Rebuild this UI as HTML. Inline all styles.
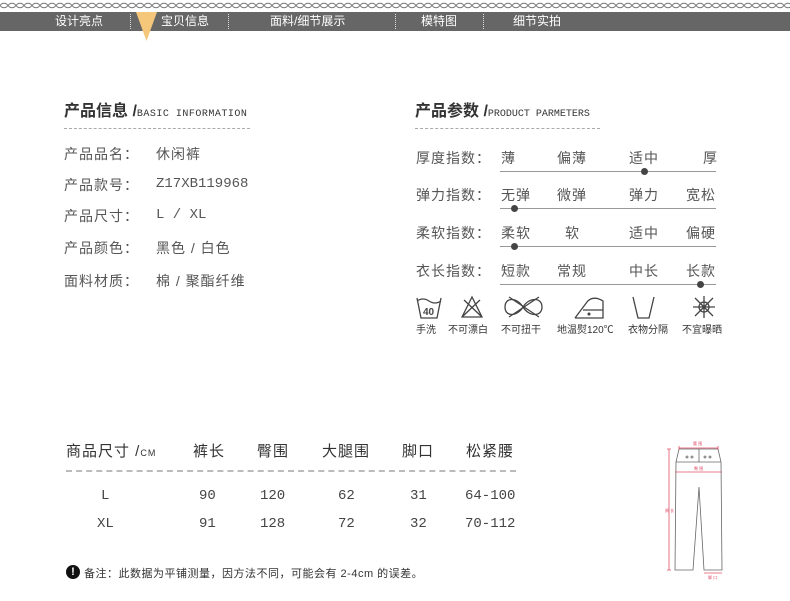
<!DOCTYPE html>
<html><head><meta charset="utf-8"><style>
*{margin:0;padding:0}
body{width:790px;height:601px;background:#fff;position:relative;overflow:hidden;font-family:"Liberation Sans","Noto Sans CJK SC",sans-serif;color:#555}
.a{position:absolute;white-space:nowrap}
.nav{position:absolute;left:0;top:12px;width:790px;height:19px;background:#666}
.nt{position:absolute;top:12px;color:#fff;font-size:12px;line-height:19px}
.sep{position:absolute;top:14px;height:15px;border-left:1px dotted #ddd}
.lbl{font-size:14px;color:#555;letter-spacing:1px}
.dash{position:absolute;height:0;border-top:1px dashed #aaa}
.ln{position:absolute;left:500px;width:216px;height:1px;background:#999}
.dot{position:absolute;width:7px;height:7px;border-radius:50%;background:#444}
.ic{font-size:10px;color:#333}
.th{font-size:15px;color:#333;top:440px;letter-spacing:1px}
.td{font-size:14px;color:#444;font-family:"Liberation Mono","Noto Sans CJK SC",monospace}
</style></head><body>
<svg class="a" style="left:0;top:0" width="790" height="11"><defs><pattern id="p" width="8" height="11" patternUnits="userSpaceOnUse"><ellipse cx="4" cy="5.5" rx="3.5" ry="2.2" fill="none" stroke="#777" stroke-width="1"/></pattern></defs><rect width="790" height="11" fill="url(#p)"/></svg>
<div class="nav"></div>
<div class="nt" style="left:55px">设计亮点</div>
<div class="sep" style="left:130px"></div>
<svg class="a" style="left:136px;top:12px" width="21" height="29"><polygon points="0,0 21,0 10.5,29" fill="#f5c77a"/></svg>
<div class="nt" style="left:161px">宝贝信息</div>
<div class="sep" style="left:228px"></div>
<div class="nt" style="left:270px">面料/细节展示</div>
<div class="sep" style="left:395px"></div>
<div class="nt" style="left:421px">模特图</div>
<div class="sep" style="left:483px"></div>
<div class="nt" style="left:513px">细节实拍</div>

<div class="a" style="left:64px;top:97px;font-size:16px;font-weight:bold;color:#333">产品信息 /<span style="font-size:10px;font-weight:normal;font-family:'Liberation Mono',monospace;letter-spacing:0.5px">BASIC INFORMATION</span></div>
<div class="dash" style="left:64px;top:128px;width:186px"></div>
<div class="a lbl" style="left:64px;top:144px">产品品名：</div><div class="a lbl" style="left:156px;top:144px">休闲裤</div>
<div class="a lbl" style="left:64px;top:175px">产品款号：</div><div class="a lbl" style="left:156px;top:176px;font-family:'Liberation Mono',monospace;letter-spacing:0">Z17XB119968</div>
<div class="a lbl" style="left:64px;top:206px">产品尺寸：</div><div class="a lbl" style="left:156px;top:207px;font-family:'Liberation Mono',monospace;letter-spacing:0">L / XL</div>
<div class="a lbl" style="left:64px;top:238px">产品颜色：</div><div class="a lbl" style="left:156px;top:238px">黑色 / 白色</div>
<div class="a lbl" style="left:64px;top:271px">面料材质：</div><div class="a lbl" style="left:156px;top:271px">棉 / 聚酯纤维</div>

<div class="a" style="left:415px;top:97px;font-size:16px;font-weight:bold;color:#333">产品参数 /<span style="font-size:10px;font-weight:normal;font-family:'Liberation Mono',monospace">PRODUCT PARMETERS</span></div>
<div class="dash" style="left:415px;top:128px;width:185px"></div>

<div class="a lbl" style="left:416px;top:148px">厚度指数：</div>
<div class="a lbl" style="left:501px;top:148px">薄</div><div class="a lbl" style="left:557px;top:148px">偏薄</div><div class="a lbl" style="left:629px;top:148px">适中</div><div class="a lbl" style="left:703px;top:148px">厚</div>
<div class="ln" style="top:171px"></div><div class="dot" style="left:641px;top:168px"></div>

<div class="a lbl" style="left:416px;top:185px">弹力指数：</div>
<div class="a lbl" style="left:501px;top:185px">无弹</div><div class="a lbl" style="left:557px;top:185px">微弹</div><div class="a lbl" style="left:629px;top:185px">弹力</div><div class="a lbl" style="left:686px;top:185px">宽松</div>
<div class="ln" style="top:208px"></div><div class="dot" style="left:511px;top:205px"></div>

<div class="a lbl" style="left:416px;top:223px">柔软指数：</div>
<div class="a lbl" style="left:501px;top:223px">柔软</div><div class="a lbl" style="left:565px;top:223px">软</div><div class="a lbl" style="left:629px;top:223px">适中</div><div class="a lbl" style="left:686px;top:223px">偏硬</div>
<div class="ln" style="top:246px"></div><div class="dot" style="left:511px;top:243px"></div>

<div class="a lbl" style="left:416px;top:261px">衣长指数：</div>
<div class="a lbl" style="left:501px;top:261px">短款</div><div class="a lbl" style="left:557px;top:261px">常规</div><div class="a lbl" style="left:629px;top:261px">中长</div><div class="a lbl" style="left:686px;top:261px">长款</div>
<div class="ln" style="top:284px"></div><div class="dot" style="left:697px;top:281px"></div>

<svg class="a" style="left:405px;top:292px" width="330" height="30" fill="none" stroke="#444" stroke-width="1.3">
<path d="M12 6 L16 26 H32 L36 6 M12 9 Q18 5 24 9 Q30 13 36 9"/><text x="18" y="23" font-size="10" fill="#444" stroke="none" font-weight="bold">40</text>
<path d="M57 25 L67 5 L77 25 Z M59 8 L77 25 M75 8 L57 25"/>
<path d="M118 15 C112 5 100 5 100 15 C100 25 112 25 118 15 C124 5 137 5 137 15 C137 25 124 25 118 15"/><path d="M104 5 L134 25 M104 25 L134 5"/>
<path d="M170 26 H198 V9 Q188 3 182 10 L170 26 M178 18 H198"/><circle cx="184" cy="22" r="0.9" fill="#444"/>
<path d="M228 5 L233 26 H244 L249 5"/>
<circle cx="299" cy="15" r="5"/><path d="M290 6 L308 24 M308 6 L290 24 M299 4 V26 M288 15 H310"/>
</svg>
<div class="a ic" style="left:416px;top:321px">手洗</div>
<div class="a ic" style="left:448px;top:321px">不可漂白</div>
<div class="a ic" style="left:501px;top:321px">不可扭干</div>
<div class="a ic" style="left:557px;top:321px">地温熨120℃</div>
<div class="a ic" style="left:628px;top:321px">衣物分隔</div>
<div class="a ic" style="left:682px;top:321px">不宜曝晒</div>

<div class="a th" style="left:66px">商品尺寸 /<span style="font-size:9px">CM</span></div>
<div class="a th" style="left:193px">裤长</div>
<div class="a th" style="left:257px">臀围</div>
<div class="a th" style="left:322px">大腿围</div>
<div class="a th" style="left:402px">脚口</div>
<div class="a th" style="left:466px">松紧腰</div>
<div class="dash" style="left:66px;top:470px;width:450px;border-top:2px dashed #bbb"></div>
<div class="a td" style="left:101px;top:488px">L</div><div class="a td" style="left:199px;top:488px">90</div><div class="a td" style="left:260px;top:488px">120</div><div class="a td" style="left:338px;top:488px">62</div><div class="a td" style="left:410px;top:488px">31</div><div class="a td" style="left:465px;top:488px">64-100</div>
<div class="a td" style="left:97px;top:516px">XL</div><div class="a td" style="left:199px;top:516px">91</div><div class="a td" style="left:260px;top:516px">128</div><div class="a td" style="left:338px;top:516px">72</div><div class="a td" style="left:410px;top:516px">32</div><div class="a td" style="left:465px;top:516px">70-112</div>

<div class="a" style="left:66px;top:565px;width:14px;height:14px;border-radius:50%;background:#111;color:#fff;font-size:11px;font-weight:bold;text-align:center;line-height:14px">!</div>
<div class="a" style="left:84px;top:565px;font-size:11px;color:#333;letter-spacing:0.5px">备注：此数据为平铺测量，因方法不同，可能会有 2-4cm 的误差。</div>

<svg class="a" style="left:665px;top:440px" width="70" height="145" fill="none" stroke="#666" stroke-width="0.8">
<path d="M14 9 H53 L56 22 L57 130 H39 L34 47 L28 130 H10 L11 22 Z"/>
<path d="M11 22 H56"/>
<circle cx="22" cy="17" r="1"/><circle cx="27" cy="17" r="1"/><circle cx="40" cy="17" r="1"/><circle cx="45" cy="17" r="1"/>
<path d="M34 9 V22"/>
<g stroke="#e0506a"><path d="M14 8 H53 M14 6 V10 M53 6 V10"/><path d="M4 9 V130 M2 9 H6 M2 130 H6"/><path d="M10 32 H57"/><path d="M39 133 H57"/></g>
<g fill="#e0506a" stroke="none" font-size="4"><text x="28" y="5">腰 围</text><text x="29" y="30">臀 围</text><text x="0" y="72">裤 长</text><text x="43" y="139">脚 口</text></g>
</svg>
</body></html>
